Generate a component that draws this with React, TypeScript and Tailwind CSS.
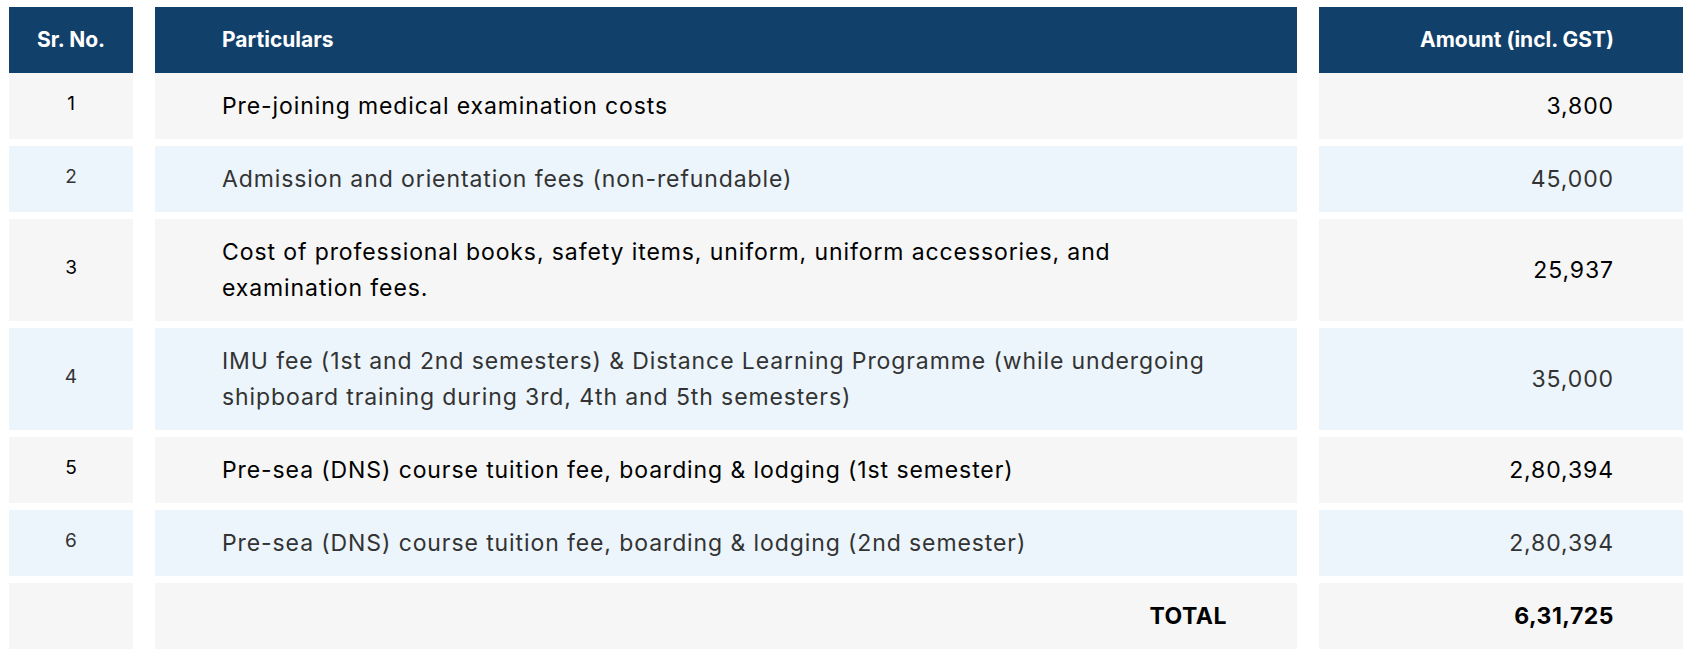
import React from 'react';

type Row = { sr: string; text: string; amount: string };

const rows: Row[] = [
  { sr: '1', text: 'Pre-joining medical examination costs', amount: '3,800' },
  { sr: '2', text: 'Admission and orientation fees (non-refundable)', amount: '45,000' },
  {
    sr: '3',
    text: 'Cost of professional books, safety items, uniform, uniform accessories, and examination fees.',
    amount: '25,937',
  },
  {
    sr: '4',
    text: 'IMU fee (1st and 2nd semesters) & Distance Learning Programme (while undergoing shipboard training during 3rd, 4th and 5th semesters)',
    amount: '35,000',
  },
  { sr: '5', text: 'Pre-sea (DNS) course tuition fee, boarding & lodging (1st semester)', amount: '2,80,394' },
  { sr: '6', text: 'Pre-sea (DNS) course tuition fee, boarding & lodging (2nd semester)', amount: '2,80,394' },
];

const cols = 'grid grid-cols-[124px_1142px_364px] gap-x-[22px]';

const App: React.FC = () => {
  return (
    <div className="min-h-screen bg-white pl-[9px] pt-[7px] font-['Inter',sans-serif]">
      <div className="flex w-[1674px] flex-col gap-y-[7px]">
        <div>
          <div className={`${cols} h-[66px] text-[21px] font-bold text-white`}>
            <div className="flex items-center justify-center bg-[#11406b]">Sr. No.</div>
            <div className="flex items-center bg-[#11406b] px-[67px]">Particulars</div>
            <div className="flex items-center justify-end bg-[#11406b] px-[69px]">Amount (incl. GST)</div>
          </div>
          <div className={cols}>
            <RowCells row={rows[0]} index={0} />
          </div>
        </div>
        {rows.slice(1).map((row, i) => (
          <div key={row.sr} className={cols}>
            <RowCells row={row} index={i + 1} />
          </div>
        ))}
        <div className={cols}>
          <div className="bg-[#f6f6f6]" />
          <div className="flex items-center justify-end bg-[#f6f6f6] px-[70px] py-[15px] text-[23px] leading-[36px] font-bold tracking-[0.5px] text-black">
            TOTAL
          </div>
          <div className="flex items-center justify-end bg-[#f6f6f6] px-[69px] py-[15px] text-[23px] leading-[36px] font-bold tracking-[0.5px] text-black">
            6,31,725
          </div>
        </div>
      </div>
    </div>
  );
};

const RowCells: React.FC<{ row: Row; index: number }> = ({ row, index }) => {
  const even = index % 2 === 1;
  const bg = even ? 'bg-[#ecf5fb]' : 'bg-[#f6f6f6]';
  const color = even ? 'text-[#333333]' : 'text-black';
  return (
    <>
      <div className={`flex items-center justify-center pb-[3px] ${bg} ${color} text-[19px]`}>{row.sr}</div>
      <div
        className={`flex items-center ${bg} ${color} py-[15px] pl-[67px] pr-[78px] text-[23px] leading-[36px] tracking-[0.9px]`}
      >
        {row.text}
      </div>
      <div className={`flex items-center justify-end ${bg} ${color} px-[69px] text-[23px] tracking-[0.9px]`}>
        {row.amount}
      </div>
    </>
  );
};

export default App;
